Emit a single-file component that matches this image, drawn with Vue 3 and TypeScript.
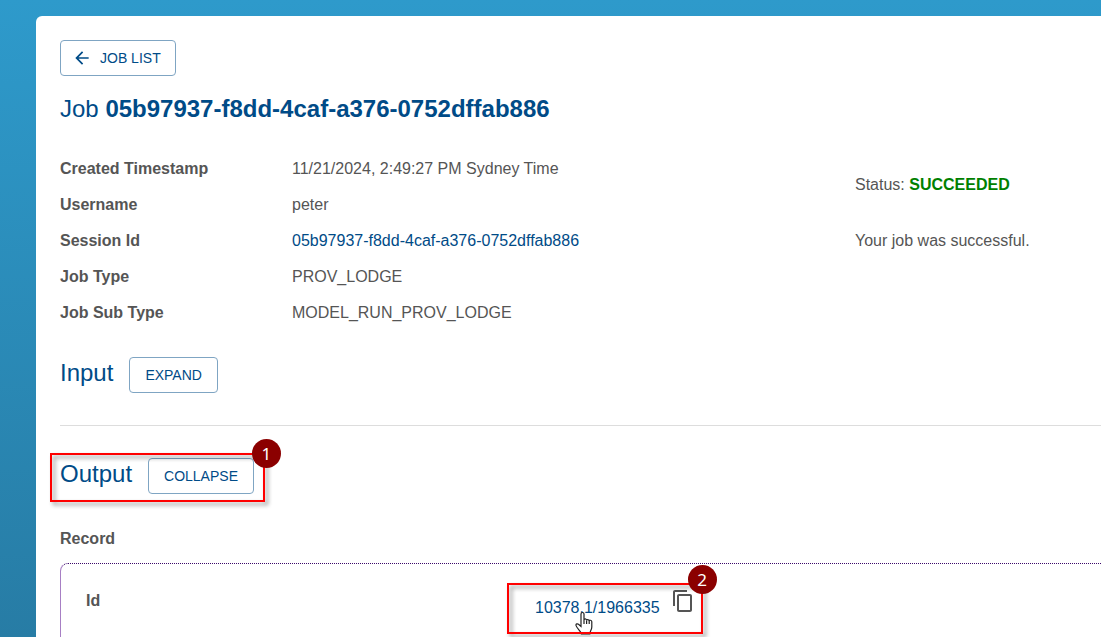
<script setup lang="ts">
import { ref } from 'vue'

interface Detail {
  label: string
  value: string
  link?: boolean
}

const jobId = '05b97937-f8dd-4caf-a376-0752dffab886'
const details: Detail[] = [
  { label: 'Created Timestamp', value: '11/21/2024, 2:49:27 PM Sydney Time' },
  { label: 'Username', value: 'peter' },
  { label: 'Session Id', value: jobId, link: true },
  { label: 'Job Type', value: 'PROV_LODGE' },
  { label: 'Job Sub Type', value: 'MODEL_RUN_PROV_LODGE' },
]
const inputOpen = ref(false)
const outputOpen = ref(true)
</script>

<template>
  <div class="page">
    <main class="card">
      <button type="button" class="btn back">
        <svg class="arrow" viewBox="0 0 24 24" aria-hidden="true">
          <path d="M20 11H7.83l5.59-5.59L12 4l-8 8 8 8 1.41-1.41L7.83 13H20v-2z" />
        </svg>
        JOB LIST
      </button>

      <h1 class="title">Job <strong>{{ jobId }}</strong></h1>

      <div class="summary">
        <dl class="details">
          <div v-for="item in details" :key="item.label" class="detail">
            <dt>{{ item.label }}</dt>
            <dd>
              <a v-if="item.link" href="#">{{ item.value }}</a>
              <template v-else>{{ item.value }}</template>
            </dd>
          </div>
        </dl>
        <div class="status">
          <p>Status: <strong>SUCCEEDED</strong></p>
          <p>Your job was successful.</p>
        </div>
      </div>

      <section class="section input">
        <div class="heading">
          <h2>Input</h2>
          <button type="button" class="btn" @click="inputOpen = !inputOpen">
            {{ inputOpen ? 'COLLAPSE' : 'EXPAND' }}
          </button>
        </div>
      </section>

      <section class="section output">
        <div class="heading">
          <h2>Output</h2>
          <button type="button" class="btn" @click="outputOpen = !outputOpen">
            {{ outputOpen ? 'COLLAPSE' : 'EXPAND' }}
          </button>
          <span class="frame frame-output"></span>
          <span class="badge badge-output">1</span>
        </div>

        <template v-if="outputOpen">
          <h3 class="record-title">Record</h3>
          <div class="record">
            <div class="record-label">Id</div>
            <div class="record-value">
              <a href="#">10378.1/1966335</a>
              <button type="button" class="copy" aria-label="Copy">
                <svg viewBox="0 0 24 24" aria-hidden="true">
                  <path d="M16 1H4c-1.1 0-2 .9-2 2v14h2V3h12V1zm3 4H8c-1.1 0-2 .9-2 2v14c0 1.1.9 2 2 2h11c1.1 0 2-.9 2-2V7c0-1.1-.9-2-2-2zm0 16H8V7h11v14z" />
                </svg>
              </button>
              <svg class="pointer" viewBox="0 0 18 24" aria-hidden="true">
                <path d="M6 14V3c0-2 3-2 3 0v6c0-1.500 2.600-1.500 2.600.5 0-1.500 2.600-1.200 2.600.5 0-1.200 2.600-1 2.600.8V16c0 3-2 4-2 7H6.500c0-2-5-6-5.500-8.500-.3-1.700 1.300-2.200 2.500-1.200L6 15.500z" />
                <path d="M9 9v4M11.600 9.500V13M14.200 10v3" />
              </svg>
              <span class="frame frame-record"></span>
              <span class="badge badge-record">2</span>
            </div>
          </div>
        </template>
      </section>
    </main>
  </div>
</template>

<style>
body {
  margin: 0;
}
</style>

<style scoped>
.page {
  box-sizing: border-box;
  height: 100vh;
  overflow: hidden;
  padding: 16px 0 0 36px;
  background: linear-gradient(#2e9acb, #277ca5);
  color: #555;
  font: 16px/24px "Liberation Sans", Arial, sans-serif;
}
.card {
  box-sizing: border-box;
  min-height: 100%;
  padding: 24px 0 0 24px;
  border-radius: 6px 0 0 0;
  background: #fff;
}
a {
  color: #004b87;
  text-decoration: none;
}
.btn {
  display: inline-flex;
  align-items: center;
  height: 36px;
  padding: 0 15px;
  border: 1px solid #7fa5c3;
  border-radius: 4px;
  background: #fff;
  color: #004b87;
  font: 14px/24px "Liberation Sans", Arial, sans-serif;
  cursor: pointer;
}
.back {
  padding: 0 14px 0 11px;
}
.arrow {
  width: 20px;
  height: 20px;
  margin-right: 8px;
  fill: #004b87;
}
.title,
h2 {
  margin: 0;
  color: #004b87;
  font-size: 24px;
  line-height: 32px;
  font-weight: 400;
}
.title {
  margin-top: 17px;
}
.summary {
  display: grid;
  grid-template-columns: minmax(0, 1fr) 246px;
  margin-top: 32px;
}
.details {
  display: flex;
  flex-direction: column;
  gap: 12px;
  margin: 0;
}
.detail {
  display: grid;
  grid-template-columns: 232px 1fr;
}
dt {
  font-weight: 700;
}
dd {
  margin: 0;
}
.status {
  padding-top: 16px;
}
.status p {
  margin: 0 0 32px;
}
.status strong {
  color: #008000;
}
.heading {
  position: relative;
  display: flex;
  gap: 16px;
  width: max-content;
}
.input {
  padding: 32px 0;
  border-bottom: 1px solid #ddd;
}
.output {
  padding-top: 32px;
}
.frame {
  position: absolute;
  border: 2px solid #f00;
  filter: drop-shadow(3px 3px 2px rgba(0, 0, 0, 0.45));
  pointer-events: none;
}
.frame-output {
  inset: -5px -11px -8px -10px;
}
.badge {
  position: absolute;
  width: 29px;
  height: 29px;
  border-radius: 50%;
  background: #8b0000;
  color: #fff;
  font-family: "Noto Sans", sans-serif;
  font-size: 17px;
  line-height: 29px;
  text-align: center;
}
.badge-output {
  top: -19px;
  right: -27px;
}
.record-title {
  margin: 33px 0 12px;
  font-size: 16px;
  line-height: 24px;
}
.record {
  display: grid;
  grid-template-columns: 449px 1fr;
  min-height: 120px;
  padding: 25px 0 24px 25px;
  border-top: 1px dotted #3c096c;
  border-left: 1px solid #a77fc4;
  border-radius: 8px 0 0 0;
}
.record-label {
  font-weight: 700;
}
.record-value {
  position: relative;
  display: flex;
  align-items: flex-start;
  width: max-content;
  height: 36px;
}
.record-value a {
  margin-top: 7px;
}
.copy {
  width: 24px;
  height: 24px;
  margin-left: 11px;
  padding: 0;
  border: 0;
  background: none;
  cursor: pointer;
}
.copy svg {
  display: block;
  fill: #555;
}
.frame-record {
  inset: -6px -8px -9px -28px;
}
.badge-record {
  top: -24px;
  right: -22px;
}
.pointer {
  position: absolute;
  top: 22px;
  left: 40px;
  width: 18px;
  height: 24px;
  fill: #fff;
  stroke: #222;
  stroke-width: 1.2;
}
</style>
